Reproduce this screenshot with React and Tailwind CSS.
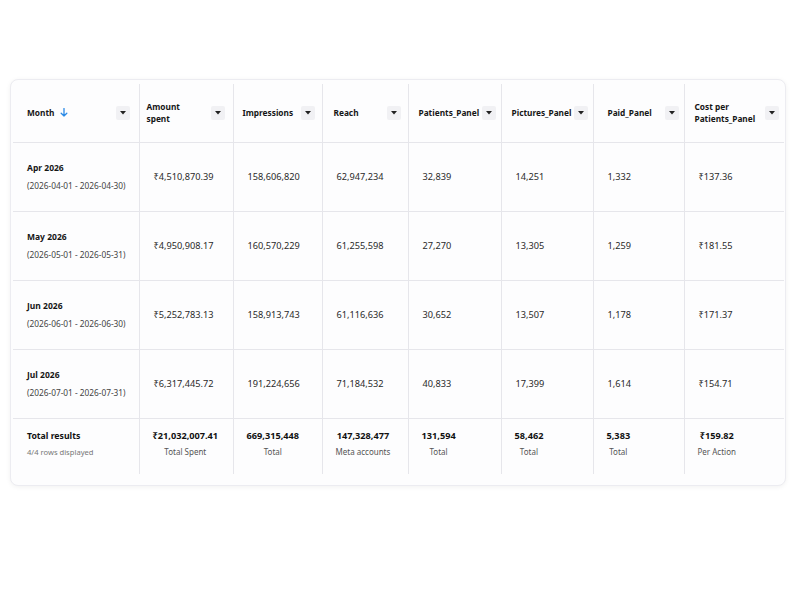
import React from 'react';

const columns = [
  { key: 'month', label: 'Month', width: 'w-[126px]', head: 'pl-[14px] pr-[9px]', sort: true },
  { key: 'spent', label: ['Amount', 'spent'], width: 'w-[94px]', head: 'pl-[7px] pr-[8px]' },
  { key: 'impressions', label: 'Impressions', width: 'w-[89px]', head: 'pl-[9px] pr-[7px]' },
  { key: 'reach', label: 'Reach', width: 'w-[86px]', head: 'pl-[11px] pr-[7px]' },
  { key: 'patients', label: 'Patients_Panel', width: 'w-[93px]', head: 'pl-[10px] pr-[5px]' },
  { key: 'pictures', label: 'Pictures_Panel', width: 'w-[92px]', head: 'pl-[10px] pr-[5px]' },
  { key: 'paid', label: 'Paid_Panel', width: 'w-[91px]', head: 'pl-[14px] pr-[5px]' },
  { key: 'cost', label: ['Cost per', 'Patients_Panel'], width: 'w-[100px]', head: 'pl-[10px] pr-[5px]' },
];

const rows = [
  { month: 'Apr 2026', range: '(2026-04-01 - 2026-04-30)', spent: '₹4,510,870.39', impressions: '158,606,820', reach: '62,947,234', patients: '32,839', pictures: '14,251', paid: '1,332', cost: '₹137.36' },
  { month: 'May 2026', range: '(2026-05-01 - 2026-05-31)', spent: '₹4,950,908.17', impressions: '160,570,229', reach: '61,255,598', patients: '27,270', pictures: '13,305', paid: '1,259', cost: '₹181.55' },
  { month: 'Jun 2026', range: '(2026-06-01 - 2026-06-30)', spent: '₹5,252,783.13', impressions: '158,913,743', reach: '61,116,636', patients: '30,652', pictures: '13,507', paid: '1,178', cost: '₹171.37' },
  { month: 'Jul 2026', range: '(2026-07-01 - 2026-07-31)', spent: '₹6,317,445.72', impressions: '191,224,656', reach: '71,184,532', patients: '40,833', pictures: '17,399', paid: '1,614', cost: '₹154.71' },
];

const totals = [
  { key: 'spent', value: '₹21,032,007.41', label: 'Total Spent' },
  { key: 'impressions', value: '669,315,448', label: 'Total' },
  { key: 'reach', value: '147,328,477', label: 'Meta accounts' },
  { key: 'patients', value: '131,594', label: 'Total' },
  { key: 'pictures', value: '58,462', label: 'Total' },
  { key: 'paid', value: '5,383', label: 'Total' },
  { key: 'cost', value: '₹159.82', label: 'Per Action' },
];

function Caret() {
  return (
    <button className="w-[14px] h-[14px] rounded-[2px] bg-[#f1f1f4] flex items-center justify-center shrink-0">
      <svg width="6" height="4" viewBox="0 0 6 4">
        <path d="M0 0 L6 0 L3 3.5 Z" fill="#222" />
      </svg>
    </button>
  );
}

function SortArrow() {
  return (
    <svg width="8" height="9" viewBox="0 0 8 9" className="ml-[6px]">
      <path d="M4 0.5 V8 M1.2 5.2 L4 8 L6.8 5.2" stroke="#2b8ae6" strokeWidth="1.3" fill="none" strokeLinecap="round" strokeLinejoin="round" />
    </svg>
  );
}

export default function App() {
  return (
    <div className="w-full h-[600px] bg-white pt-[79px] pl-[10px]" style={{ fontFamily: '"Noto Sans", "Open Sans", sans-serif' }}>
      <div className="w-[776px] h-[407px] bg-[#fdfdfe] rounded-[8px] border border-[#ececf1] shadow-[0_1px_5px_rgba(0,0,0,0.06)] pt-[4px] pl-[2px]">
        <table className="table-fixed border-collapse w-[771px]">
          <colgroup>
            {columns.map((c) => (
              <col key={c.key} className={c.width} />
            ))}
          </colgroup>
          <thead>
            <tr className="h-[58px] border-b border-[#e6e6eb]">
              {columns.map((c, i) => (
                <th key={c.key} className={`p-0 text-left align-middle ${i > 0 ? 'border-l border-[#e6e6eb]' : ''}`}>
                  <div className={`flex items-center justify-between ${c.head}`}>
                    <div className="flex items-center text-[8.3px] font-bold leading-[12px] text-[#161616]">
                      {Array.isArray(c.label) ? (
                        <span>
                          {c.label[0]}
                          <br />
                          {c.label[1]}
                        </span>
                      ) : (
                        <span>{c.label}</span>
                      )}
                      {c.sort && <SortArrow />}
                    </div>
                    <Caret />
                  </div>
                </th>
              ))}
            </tr>
          </thead>
          <tbody>
            {rows.map((r) => (
              <tr key={r.month} className="h-[69px] border-b border-[#e6e6eb]">
                <td className="pl-[14px] align-middle">
                  <div className="text-[8.5px] font-bold text-[#161616] leading-[12px]">{r.month}</div>
                  <div className="text-[8.3px] text-[#444] leading-[12px] mt-[6px]">{r.range}</div>
                </td>
                {columns.slice(1).map((c) => (
                  <td key={c.key} className="pl-[14px] align-middle border-l border-[#e6e6eb] text-[9.2px] text-[#2a2a2a]">
                    {r[c.key]}
                  </td>
                ))}
              </tr>
            ))}
          </tbody>
          <tfoot>
            <tr className="h-[56px] border-t border-[#dcdce2]">
              <td className="pl-[14px] align-top pt-[10px]">
                <div className="text-[8.7px] font-bold text-[#111] leading-[14px]">Total results</div>
                <div className="text-[7.6px] text-[#777] leading-[12px] mt-[3px]">4/4 rows displayed</div>
              </td>
              {totals.map((t) => (
                <td key={t.key} className="pl-[13px] align-top pt-[10px] border-l border-[#e6e6eb]">
                  <div className="flex flex-col items-center w-fit">
                    <div className="text-[9.2px] font-bold text-[#111] leading-[14px]">{t.value}</div>
                    <div className="text-[8px] text-[#555] leading-[12px] mt-[3px]">{t.label}</div>
                  </div>
                </td>
              ))}
            </tr>
          </tfoot>
        </table>
      </div>
    </div>
  );
}
